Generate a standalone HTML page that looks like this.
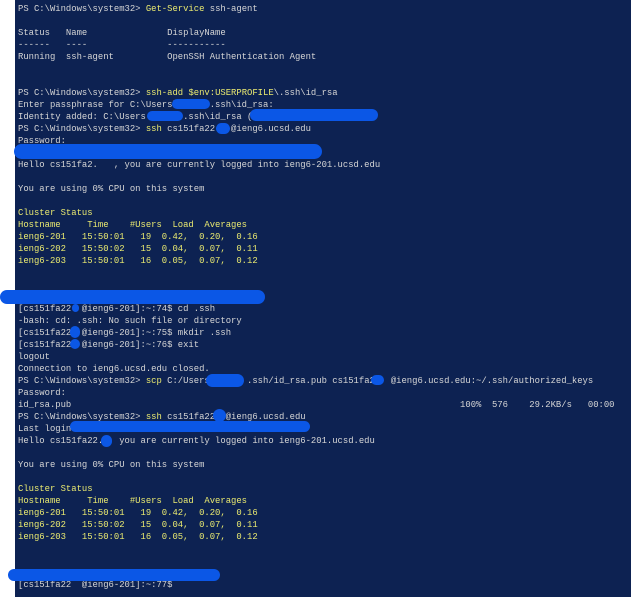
<!DOCTYPE html>
<html><head><meta charset="utf-8"><style>
html,body{margin:0;padding:0;background:#fff;width:631px;height:597px;overflow:hidden;position:relative}
#t{position:absolute;left:15px;top:0;width:616px;height:597px;background:#0d2252}
pre{position:absolute;left:18px;top:3px;margin:0;font-family:"Liberation Mono",monospace;font-size:8.9px;line-height:12px;color:#d6d6d6}
.y{color:#eaea70}
.b{position:absolute;background:#0b57e6;border-radius:8px}
</style></head><body>
<div id="t"></div>
<pre>PS C:\Windows\system32&gt; <span class="y">Get-Service</span> ssh-agent

Status   Name               DisplayName
------   ----               -----------
Running  ssh-agent          OpenSSH Authentication Agent


PS C:\Windows\system32&gt; <span class="y">ssh-add</span> <span class="y">$env:USERPROFILE</span>\.ssh\id_rsa
Enter passphrase for C:\Users\      .ssh\id_rsa:
Identity added: C:\Users       .ssh\id_rsa (
PS C:\Windows\system32&gt; <span class="y">ssh</span> cs151fa22   @ieng6.ucsd.edu
Password:

Hello cs151fa2.   , you are currently logged into ieng6-201.ucsd.edu

You are using 0% CPU on this system

<span class="y">Cluster Status
Hostname     Time    #Users  Load  Averages
ieng6-201   15:50:01   19  0.42,  0.20,  0.16
ieng6-202   15:50:02   15  0.04,  0.07,  0.11
ieng6-203   15:50:01   16  0.05,  0.07,  0.12</span>



[cs151fa22  @ieng6-201]:~:74$ cd .ssh
-bash: cd: .ssh: No such file or directory
[cs151fa22  @ieng6-201]:~:75$ mkdir .ssh
[cs151fa22  @ieng6-201]:~:76$ exit
logout
Connection to ieng6.ucsd.edu closed.
PS C:\Windows\system32&gt; <span class="y">scp</span> C:/Users       .ssh/id_rsa.pub cs151fa22  @ieng6.ucsd.edu:~/.ssh/authorized_keys
Password:
id_rsa.pub                                                                         100%  576    29.2KB/s   00:00
PS C:\Windows\system32&gt; <span class="y">ssh</span> cs151fa22  @ieng6.ucsd.edu
Last login:
Hello cs151fa22.   you are currently logged into ieng6-201.ucsd.edu

You are using 0% CPU on this system

<span class="y">Cluster Status
Hostname     Time    #Users  Load  Averages
ieng6-201   15:50:01   19  0.42,  0.20,  0.16
ieng6-202   15:50:02   15  0.04,  0.07,  0.11
ieng6-203   15:50:01   16  0.05,  0.07,  0.12</span>



[cs151fa22  @ieng6-201]:~:77$</pre>
<div class="b" style="left:172px;top:99px;width:38px;height:10px"></div>
<div class="b" style="left:147px;top:111px;width:36px;height:10px"></div>
<div class="b" style="left:250px;top:109px;width:128px;height:12px"></div>
<div class="b" style="left:216px;top:123px;width:14px;height:11px"></div>
<div class="b" style="left:14px;top:144px;width:308px;height:15px;border-radius:9px"></div>
<div class="b" style="left:0px;top:290px;width:265px;height:14px"></div>
<div class="b" style="left:72px;top:304px;width:7px;height:8px"></div>
<div class="b" style="left:70px;top:326px;width:10px;height:12px"></div>
<div class="b" style="left:70px;top:339px;width:10px;height:10px"></div>
<div class="b" style="left:206px;top:374px;width:38px;height:13px"></div>
<div class="b" style="left:371px;top:375px;width:13px;height:10px"></div>
<div class="b" style="left:213px;top:409px;width:13px;height:13px"></div>
<div class="b" style="left:70px;top:421px;width:240px;height:11px"></div>
<div class="b" style="left:101px;top:435px;width:11px;height:12px"></div>
<div class="b" style="left:8px;top:569px;width:212px;height:12px"></div>
</body></html>
